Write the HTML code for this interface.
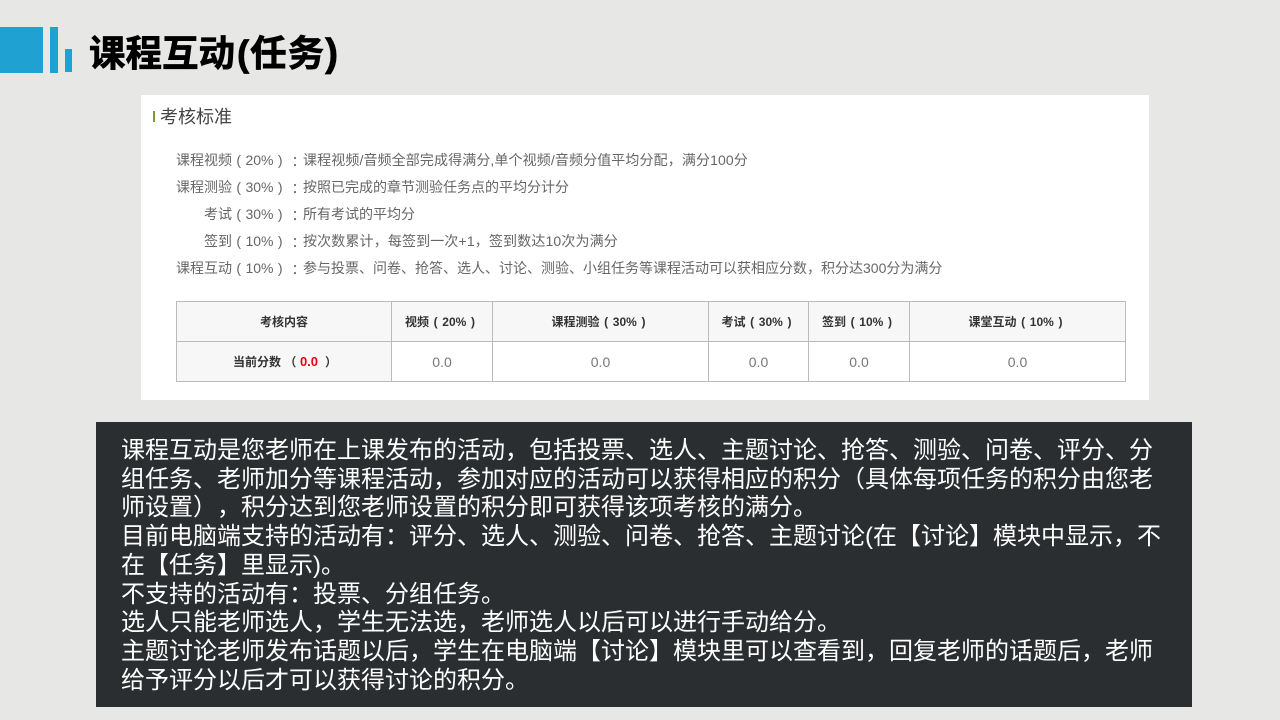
<!DOCTYPE html>
<html lang="zh"><head><meta charset="utf-8"><style>
html,body{margin:0;padding:0}
body{width:1280px;height:720px;background:#e7e7e6;position:relative;overflow:hidden;font-family:"Liberation Sans","Noto Sans CJK SC",sans-serif;text-spacing-trim:space-all;font-feature-settings:"chws" 0}
.a{position:absolute;white-space:nowrap}
.bl{background:#1fa2d1}
.t{left:89px;top:28px;font-size:36.5px;line-height:52px;font-weight:bold;color:#000;-webkit-text-stroke:.7px #000}
.card{left:141px;top:95px;width:1008px;height:305px;background:#fff}
.l{font-size:14px;line-height:20px;color:#666;word-spacing:.5px}
.c{font-size:14px;line-height:20px;color:#666;left:288px;margin-top:2px;font-family:"Liberation Sans","Noto Sans CJK TC",sans-serif}
.v{font-size:14px;line-height:20px;color:#666;left:303px}
.cell{box-sizing:border-box;border:1px solid #bbb;text-align:center;display:flex;align-items:center;justify-content:center;background:#fff;color:#777;font-size:14px}
.h{background:#f7f7f7;color:#333;font-size:12px;font-weight:bold;word-spacing:1.3px;padding-right:4px}
.dark{left:96px;top:422px;width:1096px;height:285px;background:#2b2e31}
.d{left:121px;font-size:24px;line-height:29px;color:#fff}
</style></head><body>
<div class="a bl" style="left:0;top:27px;width:43px;height:46px"></div>
<div class="a bl" style="left:50px;top:27px;width:8px;height:46px"></div>
<div class="a bl" style="left:65px;top:49px;width:7px;height:23px"></div>
<div class="a t">课程互动<span style="margin-left:2px">(</span><span style="margin-left:1px">任</span><span style="margin-left:1px">务</span><span style="margin-left:1px;font-size:39px;line-height:40px">)</span></div>
<div class="a card"></div>
<div class="a" style="left:153px;top:111px;width:2px;height:11px;background:#7a9a2e"></div>
<div class="a" style="left:160px;top:105px;font-size:18px;line-height:24px;color:#444">考核标准</div>
<div class="a l" style="left:176px;top:150px">课程视频 ( 20% )</div><div class="a c" style="top:150px">：</div><div class="a v" style="top:150px;letter-spacing:.11px">课程视频/音频全部完成得满分,单个视频/音频分值平均分配，满分100分</div>
<div class="a l" style="left:176px;top:177px">课程测验 ( 30% )</div><div class="a c" style="top:177px">：</div><div class="a v" style="top:177px">按照已完成的章节测验任务点的平均分计分</div>
<div class="a l" style="left:204px;top:204px">考试 ( 30% )</div><div class="a c" style="top:204px">：</div><div class="a v" style="top:204px">所有考试的平均分</div>
<div class="a l" style="left:204px;top:231px">签到 ( 10% )</div><div class="a c" style="top:231px">：</div><div class="a v" style="top:231px;letter-spacing:.14px">按次数累计，每签到一次+1，签到数达10次为满分</div>
<div class="a l" style="left:176px;top:258px">课程互动 ( 10% )</div><div class="a c" style="top:258px">：</div><div class="a v" style="top:258px">参与投票、问卷、抢答、选人、讨论、测验、小组任务等课程活动可以获相应分数，积分达300分为满分</div>
<div class="a cell h" style="left:176px;top:301px;width:216px;height:41px;word-spacing:0;padding:0">考核内容</div>
<div class="a cell h" style="left:391px;top:301px;width:102px;height:41px">视频 ( 20% )</div>
<div class="a cell h" style="left:492px;top:301px;width:217px;height:41px">课程测验 ( 30% )</div>
<div class="a cell h" style="left:708px;top:301px;width:101px;height:41px">考试 ( 30% )</div>
<div class="a cell h" style="left:808px;top:301px;width:102px;height:41px">签到 ( 10% )</div>
<div class="a cell h" style="left:909px;top:301px;width:217px;height:41px">课堂互动 ( 10% )</div>
<div class="a cell h" style="left:176px;top:341px;width:216px;height:41px;white-space:pre;word-spacing:0;padding:0 0 0 2px">当前分数 （<span style="color:#e60012;font-size:13px"> 0.0 </span> ）</div>
<div class="a cell" style="left:391px;top:341px;width:102px;height:41px">0.0</div>
<div class="a cell" style="left:492px;top:341px;width:217px;height:41px">0.0</div>
<div class="a cell" style="left:708px;top:341px;width:101px;height:41px">0.0</div>
<div class="a cell" style="left:808px;top:341px;width:102px;height:41px">0.0</div>
<div class="a cell" style="left:909px;top:341px;width:217px;height:41px">0.0</div>
<div class="a dark"></div>
<div class="a d" style="top:436px">课程互动是您老师在上课发布的活动，包括投票、选人、主题讨论、抢答、测验、问卷、评分、分</div>
<div class="a d" style="top:465px">组任务、老师加分等课程活动，参加对应的活动可以获得相应的积分（具体每项任务的积分由您老</div>
<div class="a d" style="top:493px">师设置），积分达到您老师设置的积分即可获得该项考核的满分。</div>
<div class="a d" style="top:522px">目前电脑端支持的活动有：评分、选人、测验、问卷、抢答、主题讨论(在【讨论】模块中显示，不</div>
<div class="a d" style="top:551px">在【任务】里显示)。</div>
<div class="a d" style="top:580px">不支持的活动有：投票、分组任务。</div>
<div class="a d" style="top:608px">选人只能老师选人，学生无法选，老师选人以后可以进行手动给分。</div>
<div class="a d" style="top:637px">主题讨论老师发布话题以后，学生在电脑端【讨论】模块里可以查看到，回复老师的话题后，老师</div>
<div class="a d" style="top:666px">给予评分以后才可以获得讨论的积分。</div>
</body></html>
